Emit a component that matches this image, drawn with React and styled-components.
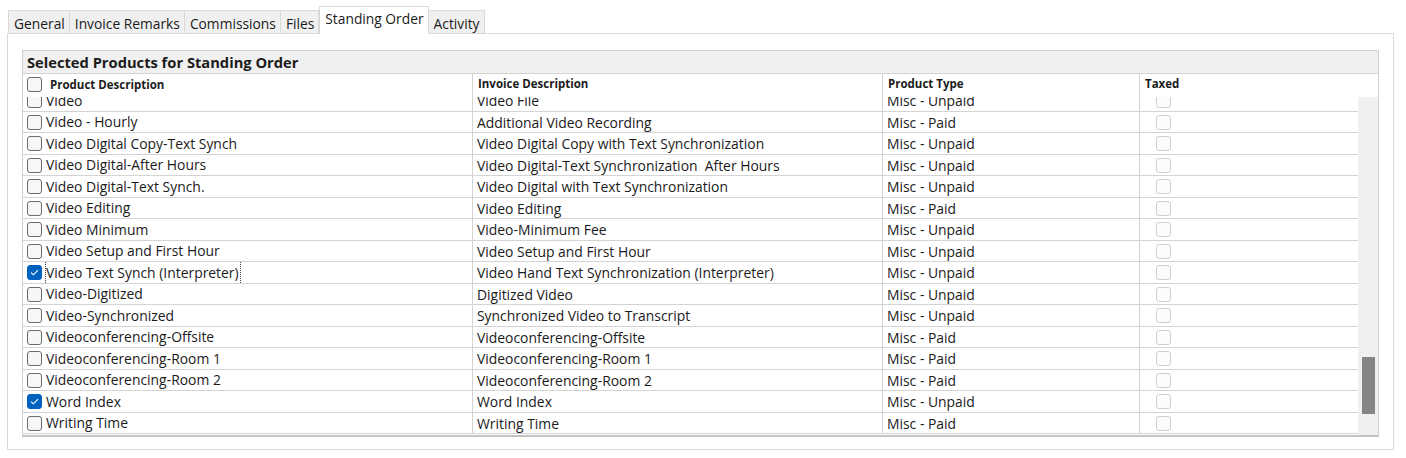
import React from "react";
import styled, { createGlobalStyle } from "styled-components";

const GlobalStyle = createGlobalStyle`
  body {
    margin: 0;
    background: #ffffff;
    font-family: "Open Sans", "Noto Sans", sans-serif;
    color: #1b1b1b;
  }
`;

const tabs = ["General", "Invoice Remarks", "Commissions", "Files", "Standing Order", "Activity"];

const rows = [
  ["Video", "Video File", "Misc - Unpaid"],
  ["Video - Hourly", "Additional Video Recording", "Misc - Paid"],
  ["Video Digital Copy-Text Synch", "Video Digital Copy with Text Synchronization", "Misc - Unpaid"],
  ["Video Digital-After Hours", "Video Digital-Text Synchronization  After Hours", "Misc - Unpaid"],
  ["Video Digital-Text Synch.", "Video Digital with Text Synchronization", "Misc - Unpaid"],
  ["Video Editing", "Video Editing", "Misc - Paid"],
  ["Video Minimum", "Video-Minimum Fee", "Misc - Unpaid"],
  ["Video Setup and First Hour", "Video Setup and First Hour", "Misc - Unpaid"],
  ["Video Text Synch (Interpreter)", "Video Hand Text Synchronization (Interpreter)", "Misc - Unpaid", true, true],
  ["Video-Digitized", "Digitized Video", "Misc - Unpaid"],
  ["Video-Synchronized", "Synchronized Video to Transcript", "Misc - Unpaid"],
  ["Videoconferencing-Offsite", "Videoconferencing-Offsite", "Misc - Paid"],
  ["Videoconferencing-Room 1", "Videoconferencing-Room 1", "Misc - Paid"],
  ["Videoconferencing-Room 2", "Videoconferencing-Room 2", "Misc - Paid"],
  ["Word Index", "Word Index", "Misc - Unpaid", true],
  ["Writing Time", "Writing Time", "Misc - Paid"],
];

export default function App() {
  return (
    <>
      <GlobalStyle />
      <Page>
        <TabStrip>
          {tabs.map((t) => (
            <Tab key={t} active={t === "Standing Order"}>{t}</Tab>
          ))}
        </TabStrip>
        <Panel>
          <Group>
            <GroupTitle>Selected Products for Standing Order</GroupTitle>
            <HeaderRow>
              <HeadCell first>
                <Check />
                <span>Product Description</span>
              </HeadCell>
              <HeadCell>Invoice Description</HeadCell>
              <HeadCell>Product Type</HeadCell>
              <HeadCell>Taxed</HeadCell>
            </HeaderRow>
            <Body>
              <Viewport>
                <Rows>
                  {rows.map(([name, invoice, type, checked, focused]) => (
                    <Row key={name}>
                      <Cell first>
                        <Check checked={checked}>
                          {checked && (
                            <svg width="9" height="7" viewBox="0 0 9 7">
                              <path d="M1 3.6 L3.4 5.8 L8 1.2" fill="none" stroke="#fff" strokeWidth="1.1" />
                            </svg>
                          )}
                        </Check>
                        <Label focused={focused}>{name}</Label>
                      </Cell>
                      <Cell>{invoice}</Cell>
                      <Cell>{type}</Cell>
                      <Cell taxed>
                        <Check disabled />
                      </Cell>
                    </Row>
                  ))}
                </Rows>
              </Viewport>
              <ScrollTrack>
                <Thumb offset={260} />
              </ScrollTrack>
            </Body>
          </Group>
        </Panel>
      </Page>
    </>
  );
}

const Page = styled.div`
  padding: 6px 0 0 7px;
  width: 1387px;
`;

const TabStrip = styled.div`
  display: flex;
  align-items: flex-end;
  height: 27px;
  padding-left: 1px;
`;

const Tab = styled.div`
  box-sizing: border-box;
  height: ${(p) => (p.active ? "28px" : "24px")};
  margin-bottom: -1px;
  padding: ${(p) => (p.active ? "3px 4px 0 5px" : "4px 4px 0 5px")};
  background: ${(p) => (p.active ? "#ffffff" : "#f0f0f0")};
  border: 1px solid #d9d9d9;
  border-bottom: ${(p) => (p.active ? "none" : "1px solid #d9d9d9")};
  border-left: ${(p) => (p.active ? "1px solid #d9d9d9" : "none")};
  font-size: 13.8px;
  line-height: 17px;
  color: #1b1b1b;
  position: relative;
  z-index: ${(p) => (p.active ? 1 : 0)};
  &:first-child {
    border-left: 1px solid #d9d9d9;
  }
`;

const Panel = styled.div`
  box-sizing: border-box;
  height: 417px;
  border: 1px solid #d9d9d9;
  background: #ffffff;
  padding: 16px 0 0 14px;
`;

const Group = styled.div`
  box-sizing: border-box;
  width: 1357px;
  border: 1px solid #d0d0d0;
  border-bottom: 2px solid #c4c4c4;
`;

const GroupTitle = styled.div`
  height: 22px;
  background: #f0f0f0;
  border-bottom: 1px solid #d4d4d4;
  padding-left: 4px;
  font-size: 14.7px;
  font-weight: 700;
  line-height: 22px;
  color: #1b1b1b;
`;

const columns = "449px 410px 257px 1fr";

const HeaderRow = styled.div`
  display: grid;
  grid-template-columns: ${columns};
  height: 23px;
`;

const HeadCell = styled.div`
  display: flex;
  align-items: flex-start;
  gap: 8px;
  padding: ${(p) => (p.first ? "3px 0 0 4px" : "2px 0 0 5px")};
  border-left: ${(p) => (p.first ? "none" : "1px solid #d4d4d4")};
  font-size: 11.5px;
  font-weight: 700;
  line-height: 16px;
  color: #1b1b1b;
`;

const Body = styled.div`
  display: flex;
  height: 338px;
`;

const Viewport = styled.div`
  flex: 1;
  overflow: hidden;
`;

const Rows = styled.div`
  margin-top: -6.7px;
`;

const Row = styled.div`
  box-sizing: border-box;
  display: grid;
  grid-template-columns: ${columns};
  height: 21.5px;
  border-bottom: 1px solid #d4d4d4;
`;

const Cell = styled.div`
  display: flex;
  align-items: center;
  gap: 5px;
  padding-left: ${(p) => (p.taxed ? "16px" : "4px")};
  border-left: ${(p) => (p.first ? "none" : "1px solid #d4d4d4")};
  font-size: 13.9px;
  white-space: pre;
  overflow: hidden;
  color: #1b1b1b;
`;

const Label = styled.span`
  padding: 1px 1px 2px 0;
  margin-left: -1px;
  outline: ${(p) => (p.focused ? "1px dotted #444" : "none")};
  outline-offset: 0;
`;

const Check = styled.span`
  box-sizing: border-box;
  flex: none;
  width: 15px;
  height: 15px;
  border-radius: 3px;
  display: flex;
  align-items: center;
  justify-content: center;
  background: ${(p) => (p.checked ? "#0062bf" : p.disabled ? "#fcfcfc" : "#f7f7f7")};
  border: 1px solid ${(p) => (p.checked ? "#0062bf" : p.disabled ? "#cfcfcf" : "#6b6b6b")};
`;

const ScrollTrack = styled.div`
  width: 20px;
  background: #f0f0f0;
  display: flex;
  flex-direction: column;
  align-items: center;
`;

const Thumb = styled.div`
  margin-top: ${(p) => p.offset}px;
  width: 13px;
  height: 57px;
  background: #858585;
`;
